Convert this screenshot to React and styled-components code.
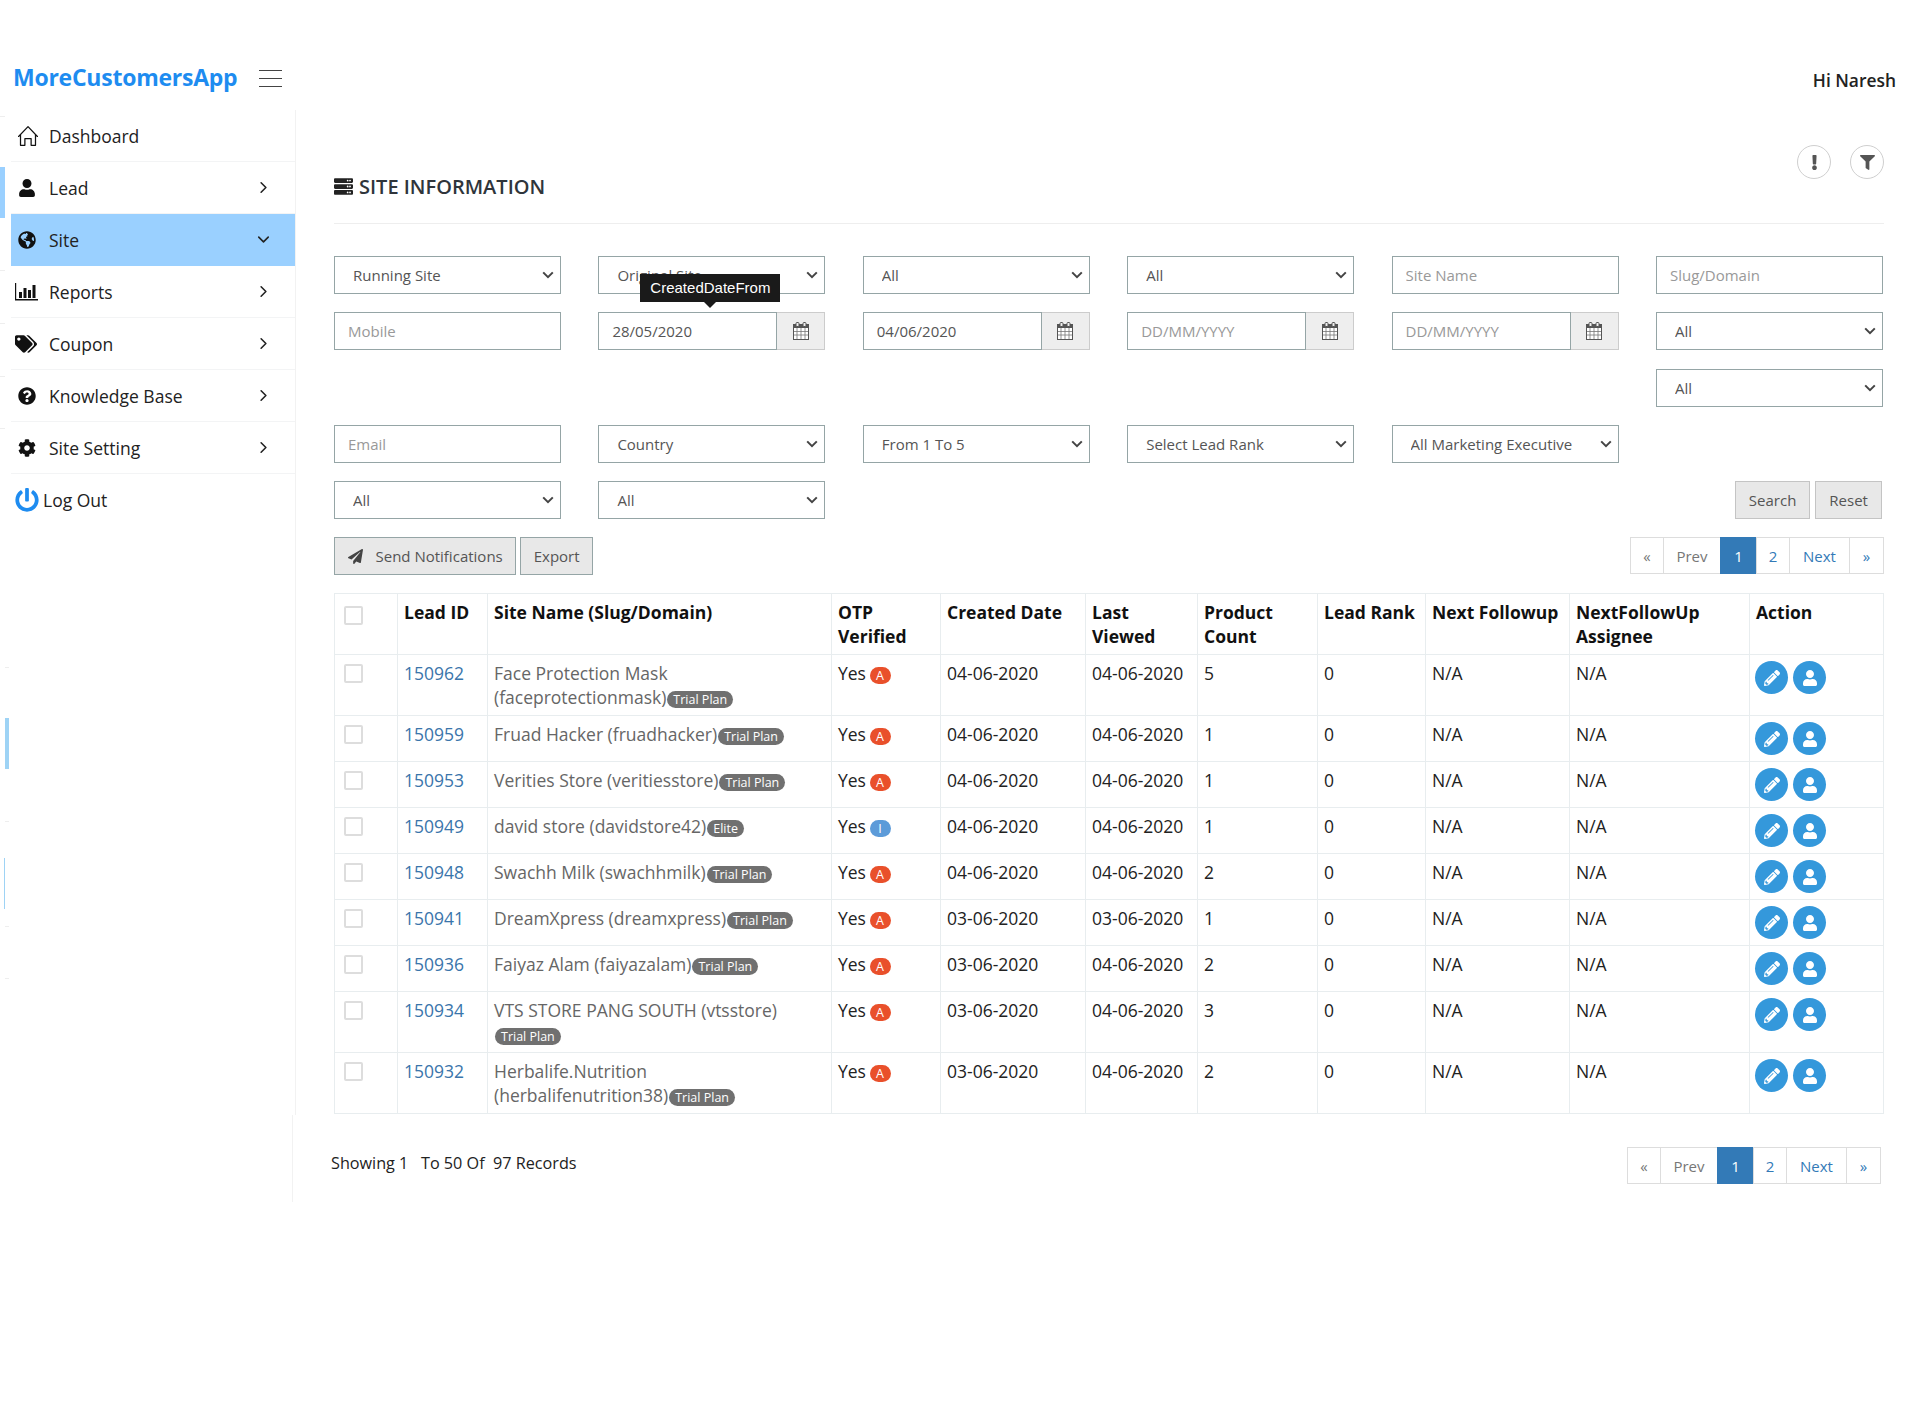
import React from "react";
import styled, { createGlobalStyle } from "styled-components";
import { SlHome } from "react-icons/sl";
import {
  FaUser,
  FaGlobeAmericas,
  FaTags,
  FaQuestionCircle,
  FaCog,
  FaPowerOff,
  FaServer,
  FaExclamation,
  FaFilter,
  FaPaperPlane,
  FaPencilAlt,
} from "react-icons/fa";
import { ChevronRight, ChevronDown } from "lucide-react";

const GlobalStyle = createGlobalStyle`
  html, body {
    margin: 0;
    background: #fff;
    font-family: "Open Sans", "Liberation Sans", sans-serif;
  }
  * { box-sizing: border-box; }
`;

const ReportsIcon = () => (
  <svg width="23" height="18" viewBox="0 0 23 18" fill="#111">
    <path d="M0 0h1.2v16H23v1.4H0z" />
    <rect x="4" y="9" width="3" height="6" />
    <rect x="8.5" y="5" width="3" height="10" />
    <rect x="13" y="7" width="3" height="8" />
    <rect x="17.5" y="2" width="3" height="13" />
  </svg>
);

const navItems = [
  { label: "Dashboard", icon: <SlHome size={20} /> },
  { label: "Lead", icon: <FaUser /> , arrow: "right" },
  { label: "Site", icon: <FaGlobeAmericas />, arrow: "down", active: true },
  { label: "Reports", icon: <ReportsIcon />, arrow: "right", shift: -3 },
  { label: "Coupon", icon: <FaTags size={22} />, arrow: "right", shift: -3 },
  { label: "Knowledge Base", icon: <FaQuestionCircle />, arrow: "right" },
  { label: "Site Setting", icon: <FaCog />, arrow: "right" },
];

const rows = [
  { id: 150962, site: "Face Protection Mask (faceprotectionmask)", plan: "Trial Plan", otp: "A", created: "04-06-2020", viewed: "04-06-2020", count: 5 },
  { id: 150959, site: "Fruad Hacker (fruadhacker)", plan: "Trial Plan", otp: "A", created: "04-06-2020", viewed: "04-06-2020", count: 1 },
  { id: 150953, site: "Verities Store (veritiesstore)", plan: "Trial Plan", otp: "A", created: "04-06-2020", viewed: "04-06-2020", count: 1 },
  { id: 150949, site: "david store (davidstore42)", plan: "Elite", otp: "I", created: "04-06-2020", viewed: "04-06-2020", count: 1 },
  { id: 150948, site: "Swachh Milk (swachhmilk)", plan: "Trial Plan", otp: "A", created: "04-06-2020", viewed: "04-06-2020", count: 2 },
  { id: 150941, site: "DreamXpress (dreamxpress)", plan: "Trial Plan", otp: "A", created: "03-06-2020", viewed: "03-06-2020", count: 1 },
  { id: 150936, site: "Faiyaz Alam (faiyazalam)", plan: "Trial Plan", otp: "A", created: "03-06-2020", viewed: "04-06-2020", count: 2 },
  { id: 150934, site: "VTS STORE PANG SOUTH (vtsstore)", plan: "Trial Plan", otp: "A", created: "03-06-2020", viewed: "04-06-2020", count: 3 },
  { id: 150932, site: "Herbalife.Nutrition (herbalifenutrition38)", plan: "Trial Plan", otp: "A", created: "03-06-2020", viewed: "04-06-2020", count: 2 },
];

const columns = [63, 90, 344, 109, 145, 112, 120, 108, 144, 180, 134];

const edgeMarks = [
  { top: 116, left: 0, w: 5, h: 1, c: "#eeeeee" },
  { top: 167, left: 0, w: 5, h: 51, c: "#9ad0ff" },
  { top: 270, left: 0, w: 5, h: 1, c: "#eeeeee" },
  { top: 323, left: 0, w: 5, h: 1, c: "#eeeeee" },
  { top: 376, left: 0, w: 5, h: 1, c: "#eeeeee" },
  { top: 428, left: 0, w: 5, h: 1, c: "#eeeeee" },
  { top: 667, left: 5, w: 4, h: 1, c: "#eeeeee" },
  { top: 718, left: 5, w: 4, h: 51, c: "#9ed3f5" },
  { top: 821, left: 5, w: 4, h: 1, c: "#eeeeee" },
  { top: 858, left: 4, w: 1, h: 51, c: "#9ed3f5" },
  { top: 926, left: 5, w: 4, h: 1, c: "#eeeeee" },
  { top: 978, left: 5, w: 4, h: 1, c: "#eeeeee" },
];

const CalendarIcon = () => (
  <svg width="16" height="18" viewBox="0 0 16 18" fill="none">
    <rect x="0.5" y="2.5" width="15" height="15" fill="#fff" stroke="#555" />
    <rect x="0" y="2" width="16" height="4" fill="#555" />
    <rect x="3" y="0.5" width="3" height="4" rx="1" fill="#eee" stroke="#555" />
    <rect x="10" y="0.5" width="3" height="4" rx="1" fill="#eee" stroke="#555" />
    <path d="M4 6v11M8 6v11M12 6v11M1 9.5h14M1 13h14" stroke="#777" strokeWidth="0.8" />
  </svg>
);

const Pager = ({ shift }) => (
  <Pagination $shift={shift}>
    <PageCell $width={34} $muted>«</PageCell>
    <PageCell $width={58} $muted>Prev</PageCell>
    <PageCell $width={37} $active>1</PageCell>
    <PageCell $width={34}>2</PageCell>
    <PageCell $width={61}>Next</PageCell>
    <PageCell $width={35}>»</PageCell>
  </Pagination>
);

const Choice = ({ value, col }) => (
  <Select $col={col} defaultValue={value}>
    <option>{value}</option>
  </Select>
);

const DateField = ({ value, placeholder, children }) => (
  <DateGroup>
    {children}
    <DateInput defaultValue={value} placeholder={placeholder} />
    <DateAddon>
      <CalendarIcon />
    </DateAddon>
  </DateGroup>
);

const App = () => {
  return (
    <Page>
      <GlobalStyle />
      {edgeMarks.map((m) => (
        <EdgeMark key={m.top} $top={m.top} $left={m.left} $w={m.w} $h={m.h} $c={m.c} />
      ))}
      <Header>
        <Brand>
          <Logo>MoreCustomersApp</Logo>
          <Burger>
            <span />
            <span />
            <span />
          </Burger>
        </Brand>
        <Greeting>Hi Naresh</Greeting>
      </Header>
      <Body>
        <SideColumn>
          <Sidebar>
            {navItems.map((item) => (
              <NavItem key={item.label} $active={item.active}>
                <NavIcon $shift={item.shift}>{item.icon}</NavIcon>
                <NavLabel>{item.label}</NavLabel>
                {item.arrow === "right" && <ChevronRight size={19} strokeWidth={2} color="#222" />}
                {item.arrow === "down" && <ChevronDown size={19} strokeWidth={2} color="#222" />}
              </NavItem>
            ))}
            <LogoutItem>
              <FaPowerOff />
              <span>Log Out</span>
            </LogoutItem>
          </Sidebar>
          <SidebarTail />
        </SideColumn>
        <Main>
          <PageHead>
            <Title>
              <FaServer />
              <span>SITE INFORMATION</span>
            </Title>
            <HeadActions>
              <RoundButton>
                <FaExclamation />
              </RoundButton>
              <RoundButton>
                <FaFilter />
              </RoundButton>
            </HeadActions>
          </PageHead>

          <Filters>
            <Choice value="Running Site" />
            <Choice value="Original Site" />
            <Choice value="All" />
            <Choice value="All" />
            <TextInput placeholder="Site Name" />
            <TextInput placeholder="Slug/Domain" />

            <TextInput placeholder="Mobile" />
            <DateField value="28/05/2020">
              <Tooltip>CreatedDateFrom</Tooltip>
            </DateField>
            <DateField value="04/06/2020" />
            <DateField placeholder="DD/MM/YYYY" />
            <DateField placeholder="DD/MM/YYYY" />
            <Choice value="All" />

            <Choice value="All" col={6} />

            <TextInput placeholder="Email" />
            <Choice value="Country" />
            <Choice value="From 1 To 5" />
            <Choice value="Select Lead Rank" />
            <Choice value="All Marketing Executive" />
            <span />

            <Choice value="All" />
            <Choice value="All" />
            <FilterActions>
              <PlainButton>Search</PlainButton>
              <PlainButton>Reset</PlainButton>
            </FilterActions>
          </Filters>

          <TableBar>
            <BarButtons>
              <ActionButton>
                <FaPaperPlane />
                Send Notifications
              </ActionButton>
              <ActionButton>Export</ActionButton>
            </BarButtons>
            <Pager />
          </TableBar>

          <Table>
            <colgroup>
              {columns.map((w, i) => (
                <col key={i} width={w} />
              ))}
            </colgroup>
            <thead>
              <tr>
                <Th>
                  <CheckBox type="checkbox" $top={6} />
                </Th>
                <Th>Lead ID</Th>
                <Th>Site Name (Slug/Domain)</Th>
                <Th>OTP Verified</Th>
                <Th>Created Date</Th>
                <Th>Last Viewed</Th>
                <Th>Product Count</Th>
                <Th>Lead Rank</Th>
                <Th>Next Followup</Th>
                <Th>NextFollowUp Assignee</Th>
                <Th>Action</Th>
              </tr>
            </thead>
            <tbody>
              {rows.map((row) => (
                <tr key={row.id}>
                  <Td>
                    <CheckBox type="checkbox" $top={3} />
                  </Td>
                  <Td>
                    <LeadLink>{row.id}</LeadLink>
                  </Td>
                  <SiteCell>
                    {row.site}
                    <PlanBadge>{row.plan}</PlanBadge>
                  </SiteCell>
                  <Td>
                    Yes <OtpBadge $info={row.otp === "I"}>{row.otp}</OtpBadge>
                  </Td>
                  <Td>{row.created}</Td>
                  <Td>{row.viewed}</Td>
                  <Td>{row.count}</Td>
                  <Td>0</Td>
                  <Td>N/A</Td>
                  <Td>N/A</Td>
                  <Td>
                    <RowActions>
                      <CircleAction>
                        <FaPencilAlt />
                      </CircleAction>
                      <CircleAction>
                        <FaUser />
                      </CircleAction>
                    </RowActions>
                  </Td>
                </tr>
              ))}
            </tbody>
          </Table>

          <TableFoot>
            <Showing>Showing 1&nbsp;&nbsp; To 50 Of&nbsp; 97 Records</Showing>
            <Pager shift={3} />
          </TableFoot>
        </Main>
      </Body>
    </Page>
  );
};

const Page = styled.div`
  position: relative;
  width: 1920px;
  min-height: 1424px;
  background: #fff;
  overflow: hidden;
`;

const EdgeMark = styled.i`
  position: absolute;
  top: ${(p) => p.$top}px;
  left: ${(p) => p.$left}px;
  width: ${(p) => p.$w}px;
  height: ${(p) => p.$h}px;
  background: ${(p) => p.$c};
`;

const Header = styled.header`
  height: 110px;
  display: flex;
  justify-content: space-between;
  align-items: flex-start;
  padding: 60px 24px 0 13px;
`;

const Brand = styled.div`
  display: flex;
  align-items: center;
  gap: 22px;
`;

const Logo = styled.div`
  font-size: 23px;
  line-height: 34px;
  font-weight: 700;
  color: #1e8cf0;
  letter-spacing: -0.25px;
`;

const Burger = styled.div`
  width: 23px;
  display: flex;
  flex-direction: column;
  gap: 7px;
  margin-top: 2px;

  span {
    display: block;
    height: 1px;
    background: #444;
  }
`;

const Greeting = styled.div`
  font-size: 17.4px;
  line-height: 41px;
  font-weight: 600;
  color: #222;
`;

const Body = styled.div`
  display: flex;
  align-items: flex-start;
`;

const SideColumn = styled.div`
  width: 296px;
  flex: none;
  display: flex;
  flex-direction: column;
`;

const Sidebar = styled.nav`
  height: 1005px;
  padding-left: 11px;
  border-right: 1px solid #f2f2f2;
`;

const SidebarTail = styled.div`
  width: 293px;
  height: 87px;
  border-right: 1px solid #f2f2f2;
`;

const NavItem = styled.div`
  height: 52px;
  display: flex;
  align-items: center;
  padding-left: 7px;
  padding-right: 22px;
  border-bottom: 1px solid ${(p) => (p.$active ? "#9ad0ff" : "#f3f4f5")};
  background: ${(p) => (p.$active ? "#9ad0ff" : "transparent")};
  color: #222;
`;

const NavIcon = styled.span`
  width: 31px;
  display: flex;
  align-items: center;
  font-size: 18px;
  color: #111;
  margin-left: ${(p) => p.$shift || 0}px;
  margin-right: ${(p) => -(p.$shift || 0)}px;
`;

const NavLabel = styled.span`
  flex: 1;
  font-size: 17.5px;
`;

const LogoutItem = styled.div`
  height: 52px;
  display: flex;
  align-items: center;
  gap: 4px;
  padding-left: 4px;
  font-size: 17.5px;
  color: #222;

  svg {
    font-size: 24px;
    color: #1e8cf0;
  }
`;

const Main = styled.main`
  flex: 1;
  padding: 35px 36px 0 38px;
`;

const PageHead = styled.div`
  height: 79px;
  display: flex;
  justify-content: space-between;
  align-items: flex-start;
  border-bottom: 1px solid #eeeeee;
  margin-bottom: 32px;
`;

const Title = styled.h1`
  margin: 28px 0 0;
  display: flex;
  align-items: center;
  gap: 6px;
  font-size: 20px;
  line-height: 27px;
  font-weight: 560;
  color: #2f353b;

  svg {
    font-size: 19px;
    color: #222;
  }
`;

const HeadActions = styled.div`
  display: flex;
  gap: 19px;
`;

const RoundButton = styled.button`
  width: 34px;
  height: 34px;
  padding: 0;
  border: 1px solid #cfcfcf;
  border-radius: 50%;
  background: #fff;
  color: #555;
  font-size: 15px;
  display: flex;
  align-items: center;
  justify-content: center;
`;

const Filters = styled.div`
  display: grid;
  grid-template-columns: repeat(6, 227px);
  column-gap: 37.4px;
  row-gap: 18.3px;
  grid-auto-rows: 38px;
`;

const fieldStyle = `
  height: 38px;
  width: 100%;
  border: 1px solid #95a5a6;
  border-radius: 0;
  background: #fff;
  font-family: "Open Sans", "Liberation Sans", sans-serif;
  font-size: 15px;
  color: #555;
  outline: none;
  &::placeholder { color: #999; opacity: 1; }
`;

const Select = styled.select`
  ${fieldStyle}
  appearance: none;
  padding: 0 24px 0 18px;
  background: #fff url("data:image/svg+xml,%3Csvg xmlns='http://www.w3.org/2000/svg' width='12' height='8' viewBox='0 0 12 8'%3E%3Cpath d='M1.2 1.4 6 6.2l4.8-4.8' fill='none' stroke='%23444' stroke-width='2'/%3E%3C/svg%3E") no-repeat right 6px center;
  grid-column: ${(p) => p.$col || "auto"};
`;

const TextInput = styled.input`
  ${fieldStyle}
  padding: 0 13px;
`;

const DateGroup = styled.div`
  position: relative;
  display: flex;
`;

const DateInput = styled.input`
  ${fieldStyle}
  flex: 1;
  min-width: 0;
  padding: 0 13px;
`;

const DateAddon = styled.span`
  width: 48px;
  flex: none;
  display: flex;
  align-items: center;
  justify-content: center;
  background: #eeeeee;
  border: 1px solid #ccc;
  border-left: 0;
`;

const Tooltip = styled.div`
  position: absolute;
  left: 42px;
  bottom: 48px;
  width: 140px;
  height: 28px;
  background: #1a1a1a;
  color: #fff;
  font-family: "Liberation Sans", Arial, sans-serif;
  font-size: 15px;
  line-height: 28px;
  text-align: center;

  &::after {
    content: "";
    position: absolute;
    left: 64px;
    top: 100%;
    border: 6px solid transparent;
    border-top-color: #1a1a1a;
    border-bottom: 0;
  }
`;

const FilterActions = styled.div`
  grid-column: 3 / 7;
  display: flex;
  justify-content: flex-end;
  gap: 5px;
  padding-right: 1px;
`;

const PlainButton = styled.button`
  height: 38px;
  padding: 0 13px;
  border: 1px solid #c4c4c4;
  background: #e8e8e8;
  color: #555;
  font-family: inherit;
  font-size: 15px;
`;

const TableBar = styled.div`
  display: flex;
  justify-content: space-between;
  margin-top: 18px;
`;

const BarButtons = styled.div`
  display: flex;
  gap: 4px;
`;

const ActionButton = styled.button`
  height: 38px;
  padding: 0 12.5px;
  display: flex;
  align-items: center;
  gap: 13px;
  border: 1px solid #95a5a6;
  background: #e8e8e8;
  color: #555;
  font-family: inherit;
  font-size: 15px;

  svg {
    font-size: 15px;
    color: #444;
  }
`;

const Pagination = styled.div`
  display: flex;
  height: 37px;
  margin-right: ${(p) => p.$shift || 0}px;
`;

const PageCell = styled.span`
  width: ${(p) => p.$width}px;
  margin-left: -1px;
  display: flex;
  align-items: center;
  justify-content: center;
  font-size: 15px;
  border: 1px solid ${(p) => (p.$active ? "#337ab7" : "#dddddd")};
  background: ${(p) => (p.$active ? "#337ab7" : "#fff")};
  color: ${(p) => (p.$active ? "#fff" : p.$muted ? "#777" : "#337ab7")};
`;

const Table = styled.table`
  margin-top: 18px;
  width: 1549px;
  table-layout: fixed;
  border-collapse: collapse;
  font-size: 17.5px;
  line-height: 24px;
  color: #222;
`;

const Th = styled.th`
  padding: 6px;
  text-align: left;
  vertical-align: top;
  font-weight: 700;
  color: #111;
  border: 1px solid #e8edef;
`;

const Td = styled.td`
  padding: 6px;
  vertical-align: top;
  border: 1px solid #e8edef;
`;

const SiteCell = styled(Td)`
  color: #666;
  padding-right: 9px;
`;

const CheckBox = styled.input`
  appearance: none;
  display: block;
  width: 19px;
  height: 19px;
  margin: ${(p) => p.$top}px 0 0 3px;
  border: 2px solid #dddddd;
  border-radius: 2px;
  background: #fff;
`;

const LeadLink = styled.a`
  color: #3a75ab;
`;

const PlanBadge = styled.span`
  display: inline-block;
  margin-left: 1px;
  padding: 0 6px;
  height: 17px;
  line-height: 17px;
  border-radius: 9px;
  background: #707070;
  color: #fff;
  font-size: 12.5px;
  vertical-align: 0;
`;

const OtpBadge = styled.span`
  display: inline-block;
  min-width: 21px;
  height: 17px;
  margin-left: -1px;
  line-height: 17px;
  border-radius: 9px;
  background: ${(p) => (p.$info ? "#5c9bd9" : "#e9502b")};
  color: #fff;
  font-size: 12.5px;
  text-align: center;
  vertical-align: 0;
`;

const RowActions = styled.div`
  display: flex;
  gap: 5px;
  margin-left: -1px;
`;

const CircleAction = styled.button`
  width: 33px;
  height: 33px;
  padding: 0;
  border: 0;
  border-radius: 50%;
  background: #3498db;
  color: #fff;
  font-size: 16px;
  display: flex;
  align-items: center;
  justify-content: center;
`;

const TableFoot = styled.div`
  display: flex;
  justify-content: space-between;
  margin-top: 33px;
`;

const Showing = styled.div`
  margin-left: -3px;
  font-size: 16.2px;
  line-height: 32px;
  color: #222;
`;

export default App;
